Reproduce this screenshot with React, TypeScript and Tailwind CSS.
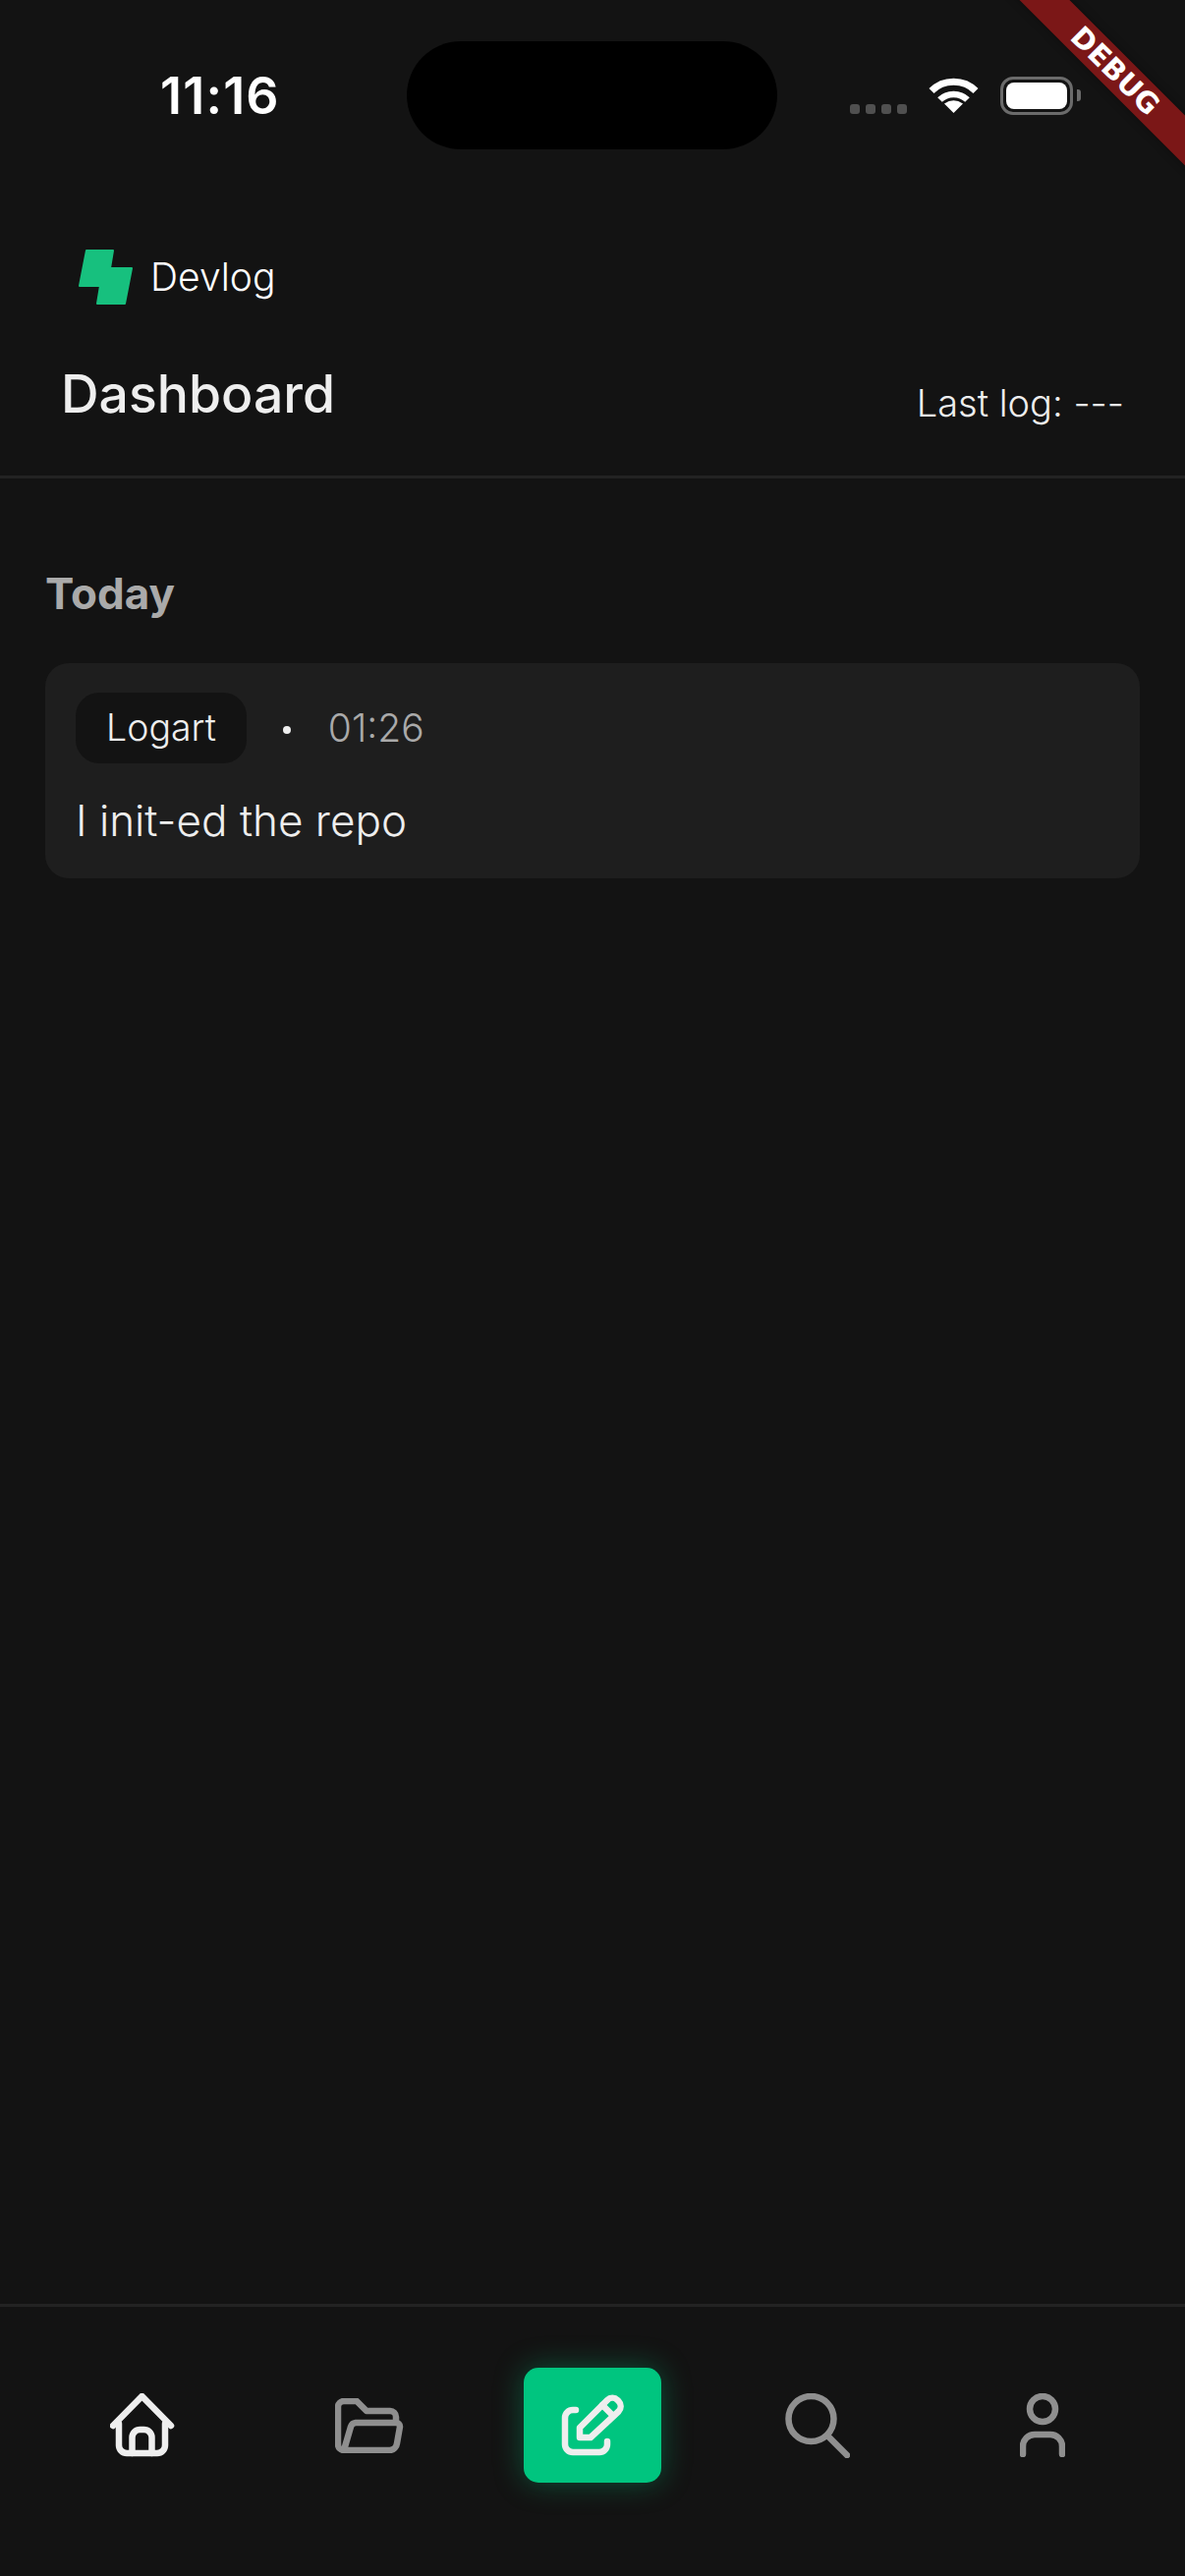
import React from "react";

const font = { fontFamily: "Inter, 'Noto Sans', sans-serif" };

function StatusBar() {
  return (
    <div className="grid grid-cols-[414px_377px_1fr] items-center pt-[42px] shrink-0">
      <div className="pl-[163px] pt-[2px] text-[52px] leading-[60px] font-semibold tracking-[1.2px] text-white">
        11:16
      </div>
      <div className="h-[110px] rounded-[55px] bg-black" />
      <div className="flex items-center pl-[74px]">
        <div className="flex gap-[6px] mt-[27px]">
          <span className="w-[10px] h-[10px] rounded-[3px] bg-[#505050]" />
          <span className="w-[10px] h-[10px] rounded-[3px] bg-[#505050]" />
          <span className="w-[10px] h-[10px] rounded-[3px] bg-[#505050]" />
          <span className="w-[10px] h-[10px] rounded-[3px] bg-[#505050]" />
        </div>
        <svg width="51" height="37" viewBox="0 0 51 37" className="ml-[22px] mt-[-2px]" fill="none">
          <path d="M3 14.5 C15 2 36 2 48 14.5" stroke="#fff" strokeWidth="7" />
          <path d="M11.5 23.5 C19 16 32 16 39.5 23.5" stroke="#fff" strokeWidth="6.5" />
          <path d="M25.5 37 L16 27.5 Q25.5 21 35 27.5 Z" fill="#fff" />
        </svg>
        <div className="ml-[22px] w-[74px] h-[39px] rounded-[13px] border-[3px] border-[#6b6b6b] p-[3px]">
          <div className="w-full h-full rounded-[8px] bg-white" />
        </div>
        <span className="ml-[4px] w-[4px] h-[12px] rounded-r-[3px] bg-[#6b6b6b]" />
      </div>
    </div>
  );
}

function Logo() {
  return (
    <svg width="56" height="58" viewBox="0 0 56 58" fill="#17c07e" stroke="#17c07e" strokeWidth="2" strokeLinejoin="round">
      <path d="M8 2 H35 L32 20 H54 L47 56 H19 L22 38 H1 Z" />
    </svg>
  );
}

function HomeIcon() {
  return (
    <svg width="66" height="66" viewBox="0 0 66 66" fill="none" stroke="#eeeeee" strokeWidth="6.5" strokeLinecap="round" strokeLinejoin="round">
      <path d="M3 33 L32.5 3 L62 33" />
      <path d="M9 31 V53 a8 8 0 0 0 8 8 H48 a8 8 0 0 0 8 -8 V31" />
      <path d="M22.5 61 V45 a8 8 0 0 1 8 -8 h4 a8 8 0 0 1 8 8 V61" />
    </svg>
  );
}

function FolderIcon() {
  return (
    <svg width="70" height="56" viewBox="0 0 70 56" fill="none" stroke="#8f8f8f" strokeWidth="6.5" strokeLinecap="round" strokeLinejoin="round">
      <path d="M9 53 a6 6 0 0 1 -6 -6 V9 a6 6 0 0 1 6 -6 H22 L32 13 H56 a6 6 0 0 1 6 6 V24" />
      <path d="M9 53 L16 29 a6 6 0 0 1 5 -4 H62 a4 4 0 0 1 4 4 L63 46 a8 8 0 0 1 -7 7 H9" />
    </svg>
  );
}

function PencilIcon() {
  return (
    <svg width="64" height="63" viewBox="0 0 64 63" fill="none" stroke="#eeeeee" strokeWidth="6.5" strokeLinecap="round" strokeLinejoin="round">
      <path d="M15 16 H12 a8 8 0 0 0 -8 8 V51 a8 8 0 0 0 8 8 H39 a8 8 0 0 0 8 -8 V48" />
      <path d="M19 44 V34 L47 6 a7.5 7.5 0 0 1 10.5 0 l1 1 a7.5 7.5 0 0 1 0 10.5 L30 44 Z" />
      <path d="M42 11 L53 22" />
    </svg>
  );
}

function SearchIcon() {
  return (
    <svg width="66" height="66" viewBox="0 0 66 66" fill="none" stroke="#8f8f8f" strokeWidth="6.5" strokeLinecap="round">
      <circle cx="26.5" cy="26" r="23" />
      <path d="M44 44 L63 63" />
    </svg>
  );
}

function UserIcon() {
  return (
    <svg width="46" height="65" viewBox="0 0 46 65" fill="none" stroke="#8f8f8f" strokeWidth="6.5" strokeLinecap="round">
      <circle cx="23" cy="16" r="13" />
      <path d="M3 62 V54 a12 12 0 0 1 12 -12 H31 a12 12 0 0 1 12 12 V62" />
    </svg>
  );
}

function BottomNav() {
  return (
    <nav className="shrink-0 h-[277px] border-t-[3px] border-[#232323] px-[30px] pt-[62px]">
      <div className="grid grid-cols-5 items-center h-[117px]">
        <div className="flex justify-center pl-[1px]">
          <HomeIcon />
        </div>
        <div className="flex justify-center pl-[5px]">
          <FolderIcon />
        </div>
        <div className="flex justify-center">
          <div className="w-[140px] h-[117px] rounded-[15px] bg-[#00c57f] flex items-center justify-center shadow-[0_0_30px_rgba(0,200,128,0.35)]">
            <PencilIcon />
          </div>
        </div>
        <div className="flex justify-center">
          <SearchIcon />
        </div>
        <div className="flex justify-center">
          <UserIcon />
        </div>
      </div>
    </nav>
  );
}

export default function App() {
  return (
    <div style={font} className="relative w-[1206px] h-[2622px] overflow-hidden bg-[#131313] flex flex-col">
      <StatusBar />

      <div className="flex items-center gap-[17px] pl-[80px] mt-[101px] shrink-0">
        <Logo />
        <span className="text-[39px] leading-[48px] font-[350] text-white">Devlog</span>
      </div>

      <header className="flex items-end justify-between pl-[62px] pr-[62px] pt-[58px] pb-[51px] border-b-[3px] border-[#232323] shrink-0">
        <h1 className="text-[53.5px] leading-[64px] font-[550] text-[#eeeeee]">Dashboard</h1>
        <span className="text-[38px] leading-[46px] font-[350] text-[#eeeeee]">Last log: ---</span>
      </header>

      <main className="flex-1 px-[46px] pt-[89px]">
        <h2 className="text-[44px] leading-[56px] font-bold text-[#aaaaaa]">Today</h2>
        <div className="mt-[43px] rounded-[24px] bg-[#1e1e1e] pl-[31px] pr-[31px] pt-[30px] pb-[30px]">
          <div className="flex items-center">
            <span className="h-[72px] px-[31px] flex items-center rounded-[24px] bg-[#131313] text-[37.5px] font-[350] text-[#eeeeee]">
              Logart
            </span>
            <span className="ml-[37px] w-[8px] h-[8px] rounded-full bg-[#eeeeee] mt-[4px]" />
            <span className="ml-[38px] text-[39px] font-light text-[#aaaaaa]">01:26</span>
          </div>
          <p className="mt-[29px] text-[44px] leading-[58px] font-light text-[#eeeeee]">I init-ed the repo</p>
        </div>
      </main>

      <BottomNav />

      {/* debug corner banner */}
      <div className="absolute left-[935px] top-[54px] w-[400px] h-[36px] rotate-45 bg-[#7b1717] shadow-[0_0_10px_rgba(0,0,0,0.35)] flex items-center justify-center">
        <span style={{ fontFamily: "'DejaVu Sans', sans-serif" }} className="text-[29px] leading-[36px] font-bold text-white">
          DEBUG
        </span>
      </div>
    </div>
  );
}
